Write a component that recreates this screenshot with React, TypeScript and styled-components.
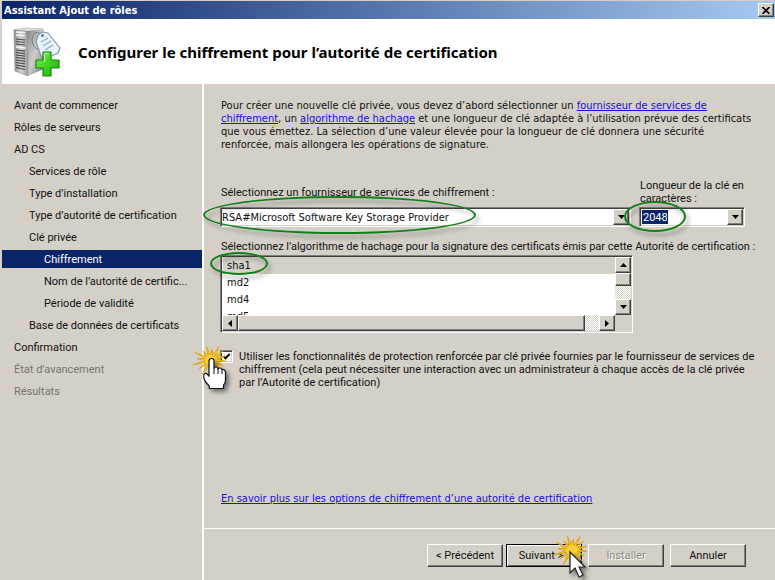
import React, { useState } from 'react';
import styled, { createGlobalStyle, css } from 'styled-components';

const face = '#d4d0c8';
const navy = '#0a246a';
const uiFont = "Roboto, 'Liberation Sans', sans-serif";
const wideFont = "'DejaVu Sans Condensed', 'DejaVu Sans', sans-serif";

const GlobalStyle = createGlobalStyle`
  *, *::before, *::after { box-sizing: border-box; }
  body { margin: 0; background: ${face}; color: #111; font: 11px/13px ${uiFont}; }
  button, input, select { font: inherit; color: inherit; }
`;

const raised = css`
  border: 1px solid;
  border-color: #fff #404040 #404040 #fff;
  box-shadow: inset -1px -1px 0 #808080;
  background: ${face};
`;

const sunken = css`
  border: 1px solid;
  border-color: #808080 #fff #fff #808080;
  box-shadow: inset 1px 1px 0 #404040, inset -1px -1px 0 ${face};
  padding: 1px;
  background: #fff;
`;

const Dialog = styled.div`
  display: flex;
  flex-direction: column;
  min-height: 100vh;
  border: solid ${face};
  border-width: 1px 0 0 2px;
  overflow: hidden;
`;

const TitleBar = styled.header`
  display: flex;
  align-items: center;
  justify-content: space-between;
  height: 18px;
  padding: 0 1px 0 2px;
  background: linear-gradient(to right, ${navy}, #a6caf0);
  color: #fff;
  font: bold 11px/13px ${wideFont};
`;

const CloseButton = styled.button`
  ${raised}
  display: grid;
  place-items: center;
  width: 16px;
  height: 14px;
  padding: 0;
`;

const Banner = styled.div`
  display: flex;
  align-items: center;
  gap: 17px;
  height: 65px;
  padding: 0 11px;
  background: #fff;
`;

const Heading = styled.h1`
  margin: 0;
  color: #000;
  font: bold 15px/20px 'Noto Sans', sans-serif;
`;

const Body = styled.div`
  flex: 1;
  display: grid;
  grid-template-columns: 202px minmax(0, 1fr);
`;

const Nav = styled.nav`
  display: flex;
  flex-direction: column;
  gap: 4px;
  padding-top: 12px;
  border-right: 2px solid #fff;
`;

const NavItem = styled.a<{ $level: number; $muted?: boolean }>`
  height: 18px;
  padding-left: ${({ $level }) => 12 + $level * 15}px;
  line-height: 20px;
  white-space: nowrap;
  text-decoration: none;
  color: ${({ $muted }) => ($muted ? '#77746e' : '#111')};
  &[aria-current='step'] {
    background: ${navy};
    color: #fff;
  }
`;

const Pane = styled.div`
  display: flex;
  flex-direction: column;
`;

const Main = styled.main`
  flex: 1;
  display: flex;
  flex-direction: column;
  padding: 15px 30px 23px 16px;
`;

const Intro = styled.p`
  margin: 0 0 28px;
  padding-left: 1px;
  font-family: ${wideFont};
  white-space: nowrap;
`;

const Link = styled.a`
  color: #1a0dd8;
`;

const Fields = styled.div`
  display: grid;
  grid-template-columns: minmax(0, 1fr) 106px;
  align-items: end;
  column-gap: 8px;
`;

const Field = styled.div`
  display: flex;
  flex-direction: column;
`;

const Label = styled.label<{ $below: number }>`
  padding-left: 1px;
  margin-bottom: ${({ $below }) => $below}px;
`;

const ListLabel = styled.div`
  margin: 13px 0 2px;
  padding-left: 1px;
  white-space: nowrap;
`;

const Combo = styled.div`
  ${sunken}
  position: relative;
  display: flex;
  height: 20px;
`;

const ComboSelect = styled.select`
  flex: 1;
  min-width: 0;
  padding: 0;
  border: 0;
  outline: 0;
  appearance: none;
  background: #fff;
  margin-top: 1px;
  font-family: ${wideFont};
`;

const ComboInput = styled.input`
  width: 26px;
  margin: 1px auto 1px 1px;
  padding: 0 1px;
  border: 0;
  outline: 0;
  background: ${navy};
  color: #fff;
`;

const ArrowButton = styled.button`
  ${raised}
  display: grid;
  place-items: center;
  flex: none;
  width: 16px;
  height: 16px;
  padding: 0;
`;

const ListBox = styled.div`
  ${sunken}
  position: relative;
  display: grid;
  grid-template: 58px 16px / minmax(0, 1fr) 16px;
  height: 78px;
  margin-right: 112px;
`;

const Options = styled.ul`
  margin: 0;
  padding: 0 0 0 1px;
  overflow: hidden;
  list-style: none;
`;

const Option = styled.li`
  height: 17px;
  padding-left: 4px;
  font: 11px/17px ${wideFont};
  cursor: default;
  &[aria-selected='true'] {
    background: ${face};
  }
`;

const Track = styled.div<{ $vertical?: boolean }>`
  display: flex;
  flex-direction: ${({ $vertical }) => ($vertical ? 'column' : 'row')};
  background: repeating-conic-gradient(#fff 0 25%, ${face} 0 50%) 0 0 / 2px 2px;
`;

const Thumb = styled.div<{ $grow?: boolean }>`
  ${raised}
  flex: ${({ $grow }) => ($grow ? '1' : 'none')};
  height: ${({ $grow }) => ($grow ? 16 : 13)}px;
`;

const Gap = styled.div<{ $vertical?: boolean }>`
  flex: ${({ $vertical }) => ($vertical ? '1' : 'none')};
  width: 14px;
`;

const Corner = styled.div`
  background: ${face};
`;

const Ring = styled.span<{ $x: number; $y: number; $w: number; $h: number }>`
  position: absolute;
  z-index: 1;
  left: ${({ $x }) => $x}px;
  top: ${({ $y }) => $y}px;
  width: ${({ $w }) => $w}px;
  height: ${({ $h }) => $h}px;
  border: 2px solid #128018;
  border-radius: 50%;
  filter: drop-shadow(3px 4px 2px rgba(0, 0, 0, 0.35));
  pointer-events: none;
`;

const CheckRow = styled.div`
  position: relative;
  display: flex;
  align-items: flex-start;
  gap: 6px;
  margin-top: 17px;
  white-space: nowrap;
`;

const CheckBox = styled.input`
  ${sunken}
  flex: none;
  width: 13px;
  height: 13px;
  margin: 0;
  padding: 0;
  appearance: none;
  &:checked {
    background: #fff url("data:image/svg+xml,%3Csvg xmlns='http://www.w3.org/2000/svg' viewBox='0 0 11 11'%3E%3Cpath d='M2.5 5 4.5 7.2 8.7 3' fill='none' stroke='black' stroke-width='2'/%3E%3C/svg%3E");
  }
`;

const MoreLink = styled(Link)`
  align-self: flex-start;
  margin-top: auto;
  padding-left: 1px;
  font-family: ${wideFont};
`;

const Footer = styled.footer`
  display: flex;
  justify-content: flex-end;
  gap: 6px;
  height: 52px;
  padding: 15px 29px 0 0;
  border-top: 1px solid #fff;
`;

const ButtonPair = styled.div`
  display: flex;
  gap: 3px;
`;

const PushButton = styled.button<{ $primary?: boolean }>`
  ${raised}
  position: relative;
  width: 76px;
  height: 23px;
  padding: 0;
  white-space: nowrap;
  ${({ $primary }) =>
    $primary &&
    css`
      padding-right: 6px;
      border-color: #000;
      box-shadow: inset 1px 1px 0 #fff, inset -1px -1px 0 #606060;
    `}
  &:disabled {
    color: #8c8982;
    text-shadow: 1px 1px 0 #fff;
  }
`;

const Pointer = styled.svg<{ $x: number; $y: number }>`
  position: absolute;
  z-index: 2;
  left: ${({ $x }) => $x}px;
  top: ${({ $y }) => $y}px;
  overflow: visible;
  pointer-events: none;
  .shape {
    filter: drop-shadow(3px 3px 2px rgba(0, 0, 0, 0.45));
  }
`;

const arrows = {
  up: 'M0 4h7L3.5 0z',
  down: 'M0 0h7L3.5 4z',
  left: 'M4 0v7L0 3.5z',
  right: 'M0 0v7l4-3.5z',
};

function Arrow({ to }: { to: keyof typeof arrows }) {
  const flat = to === 'up' || to === 'down';
  return (
    <svg width={flat ? 7 : 4} height={flat ? 4 : 7} aria-hidden="true">
      <path d={arrows[to]} fill="#000" />
    </svg>
  );
}

function ServerIcon() {
  return (
    <svg width="48" height="52" viewBox="0 0 48 52" aria-hidden="true">
      <defs>
        <linearGradient id="front" x1="0" x2="1">
          <stop offset="0" stopColor="#8b8b8b" />
          <stop offset="0.5" stopColor="#d6d6d6" />
          <stop offset="1" stopColor="#9c9c9c" />
        </linearGradient>
        <linearGradient id="side" x1="0" x2="1" y2="1">
          <stop offset="0" stopColor="#858585" />
          <stop offset="0.5" stopColor="#cfcfcf" />
          <stop offset="1" stopColor="#6d6d6d" />
        </linearGradient>
        <linearGradient id="plus" x2="1" y2="1">
          <stop offset="0" stopColor="#8af05c" />
          <stop offset="0.5" stopColor="#3fd321" />
          <stop offset="1" stopColor="#27a514" />
        </linearGradient>
      </defs>
      <path d="M1 4 11 2l19 1-14 3z" fill="#e6e6e6" stroke="#999" strokeWidth=".5" />
      <path d="M14 5 31 3v40L15 50z" fill="url(#side)" />
      <path d="M1 4l13 1 1 45L2 45z" fill="url(#front)" stroke="#777" strokeWidth=".5" />
      <path d="M3 6l9 .6M3 9l9 .6" stroke="#f4f4f4" strokeWidth="1.4" />
      <path
        d="M3 13l9 1M3 15.500l9 1M3 18l9 1M3 24l9 1.200M3 26.500l9 1.200M3 29l9 1.200M3 31.500l9 1.200M3 34l9 1.200M3 36.500l9 1.400M3 39l9 1.600M3 41.500l9 2"
        stroke="#4b4b4b"
        strokeWidth="1.200"
      />
      <path d="M3 21l9 1" stroke="#f6f6f6" strokeWidth="1.500" />
      <path d="M28 8c-5-4-9 0-9 6s5 11 9 9" fill="none" stroke="#777d85" strokeWidth="1" />
      <path d="M25 9l4-3 6 1 12 15-2 5-11 5-6-2-5-14z" fill="#e9f1f9" stroke="#7c9ab8" strokeWidth="1.200" strokeLinejoin="round" />
      <circle cx="29.500" cy="9.500" r="1.500" fill="#60788f" />
      <path d="M28 16l7-4M30 20l8-5M32 24l8-5" stroke="#92adc6" strokeWidth="1.300" />
      <path d="M30 26h8v8h8v8h-8v8h-8v-8h-7v-8h7z" fill="url(#plus)" stroke="#158a0c" strokeWidth="1.200" strokeLinejoin="round" />
      <path d="M31.500 35.500v-8h4" fill="none" stroke="#c8ffb0" />
    </svg>
  );
}

function Burst({ cx, cy }: { cx: number; cy: number }) {
  const lengths = [15, 14, 16, 12, 16, 18, 15, 19, 14, 18, 13, 16, 12, 17, 15, 15];
  const points = lengths
    .flatMap((r, i) => {
      const a = (i / lengths.length) * Math.PI * 2 + 0.1;
      const b = a + Math.PI / lengths.length;
      return [
        [cx + r * Math.cos(a), cy + r * 0.9 * Math.sin(a)],
        [cx + 6 * Math.cos(b), cy + 5 * Math.sin(b)],
      ];
    })
    .map((p) => p.join(','))
    .join(' ');
  return <polygon points={points} fill="#f6cf3a" stroke="#dfa60f" strokeWidth="1" />;
}

function HandClick() {
  return (
    <Pointer $x={-23} $y={-9} width="46" height="52" viewBox="0 0 46 52" aria-hidden="true">
      <Burst cx={14} cy={19} />
      <path
        className="shape"
        d="M12 20q0-2.500 2.500-2.500t2.500 2.500v8q0-2 2-2t2 2v1q0-2 2-2t2 2v1q0-2 1.500-1.500t2 2.500v8q0 3-2 5v3.500H12.500l-.5-3q-4-3-5-7-1-4 1-5t4 3z"
        fill="#fff"
        stroke="#111"
        strokeWidth="1.200"
      />
      <path d="M17 28v5M21 29v4M25 30v3" stroke="#111" />
    </Pointer>
  );
}

function ArrowClick() {
  return (
    <Pointer $x={43} $y={-17} width="46" height="52" viewBox="0 0 46 52" aria-hidden="true">
      <Burst cx={22} cy={22} />
      <path className="shape" d="M20 24v21l5-5 4 9 4-2-4-8h6z" fill="#fff" stroke="#222" strokeWidth="1.200" />
    </Pointer>
  );
}

const steps: { text: string; level: number; muted?: boolean; current?: boolean }[] = [
  { text: 'Avant de commencer', level: 0 },
  { text: 'Rôles de serveurs', level: 0 },
  { text: 'AD CS', level: 0 },
  { text: 'Services de rôle', level: 1 },
  { text: 'Type d’installation', level: 1 },
  { text: 'Type d’autorité de certification', level: 1 },
  { text: 'Clé privée', level: 1 },
  { text: 'Chiffrement', level: 2, current: true },
  { text: 'Nom de l’autorité de certific...', level: 2 },
  { text: 'Période de validité', level: 2 },
  { text: 'Base de données de certificats', level: 1 },
  { text: 'Confirmation', level: 0 },
  { text: 'État d’avancement', level: 0, muted: true },
  { text: 'Résultats', level: 0, muted: true },
];

export default function App() {
  const [hash, setHash] = useState('sha1');
  const [keyLength, setKeyLength] = useState('2048');
  return (
    <Dialog>
      <GlobalStyle />
      <TitleBar>
        Assistant Ajout de rôles
        <CloseButton aria-label="Fermer">
          <svg width="8" height="7" aria-hidden="true">
            <path d="M.5 0 7.500 7M7.500 0 .5 7" stroke="#000" strokeWidth="1.600" />
          </svg>
        </CloseButton>
      </TitleBar>
      <Banner>
        <ServerIcon />
        <Heading>Configurer le chiffrement pour l’autorité de certification</Heading>
      </Banner>
      <Body>
        <Nav>
          {steps.map((s) => (
            <NavItem key={s.text} href="#" $level={s.level} $muted={s.muted} aria-current={s.current ? 'step' : undefined}>
              {s.text}
            </NavItem>
          ))}
        </Nav>
        <Pane>
          <Main>
            <Intro>
              Pour créer une nouvelle clé privée, vous devez d’abord sélectionner un{' '}
              <Link href="#">
                fournisseur de services de
                <br />
                chiffrement
              </Link>
              , un <Link href="#">algorithme de hachage</Link> et une longueur de clé adaptée à l’utilisation prévue des certificats
              <br />
              que vous émettez. La sélection d’une valeur élevée pour la longueur de clé donnera une sécurité
              <br />
              renforcée, mais allongera les opérations de signature.
            </Intro>
            <Fields>
              <Field>
                <Label htmlFor="provider" $below={8}>
                  Sélectionnez un fournisseur de services de chiffrement :
                </Label>
                <Combo>
                  <ComboSelect id="provider">
                    <option>RSA#Microsoft Software Key Storage Provider</option>
                  </ComboSelect>
                  <ArrowButton tabIndex={-1} aria-label="Ouvrir la liste">
                    <Arrow to="down" />
                  </ArrowButton>
                  <Ring $x={-18} $y={-12} $w={273} $h={38} />
                </Combo>
              </Field>
              <Field>
                <Label htmlFor="length" $below={2}>
                  Longueur de la clé en caractères :
                </Label>
                <Combo>
                  <ComboInput id="length" value={keyLength} onChange={(e) => setKeyLength(e.target.value)} />
                  <ArrowButton aria-label="Ouvrir la liste">
                    <Arrow to="down" />
                  </ArrowButton>
                  <Ring $x={-16} $y={-7} $w={62} $h={31} />
                </Combo>
              </Field>
            </Fields>
            <ListLabel id="hash-label">
              Sélectionnez l’algorithme de hachage pour la signature des certificats émis par cette Autorité de certification :
            </ListLabel>
            <ListBox>
              <Options role="listbox" aria-labelledby="hash-label" tabIndex={0}>
                {['sha1', 'md2', 'md4', 'md5'].map((h) => (
                  <Option key={h} role="option" aria-selected={h === hash} onClick={() => setHash(h)}>
                    {h}
                  </Option>
                ))}
              </Options>
              <Track $vertical>
                <ArrowButton aria-label="Défiler vers le haut">
                  <Arrow to="up" />
                </ArrowButton>
                <Thumb />
                <Gap $vertical />
                <ArrowButton aria-label="Défiler vers le bas">
                  <Arrow to="down" />
                </ArrowButton>
              </Track>
              <Track>
                <ArrowButton aria-label="Défiler à gauche">
                  <Arrow to="left" />
                </ArrowButton>
                <Thumb $grow />
                <Gap />
                <ArrowButton aria-label="Défiler à droite">
                  <Arrow to="right" />
                </ArrowButton>
              </Track>
              <Corner />
              <Ring $x={-11} $y={-4} $w={58} $h={23} />
            </ListBox>
            <CheckRow>
              <CheckBox id="strong" type="checkbox" defaultChecked />
              <label htmlFor="strong">
                Utiliser les fonctionnalités de protection renforcée par clé privée fournies par le fournisseur de services de
                <br />
                chiffrement (cela peut nécessiter une interaction avec un administrateur à chaque accès de la clé privée
                <br />
                par l’Autorité de certification)
              </label>
              <HandClick />
            </CheckRow>
            <MoreLink href="#">En savoir plus sur les options de chiffrement d’une autorité de certification</MoreLink>
          </Main>
          <Footer>
            <ButtonPair>
              <PushButton>&lt; Précédent</PushButton>
              <PushButton $primary>
                Suivant &gt;
                <ArrowClick />
              </PushButton>
            </ButtonPair>
            <PushButton disabled>Installer</PushButton>
            <PushButton>Annuler</PushButton>
          </Footer>
        </Pane>
      </Body>
    </Dialog>
  );
}
